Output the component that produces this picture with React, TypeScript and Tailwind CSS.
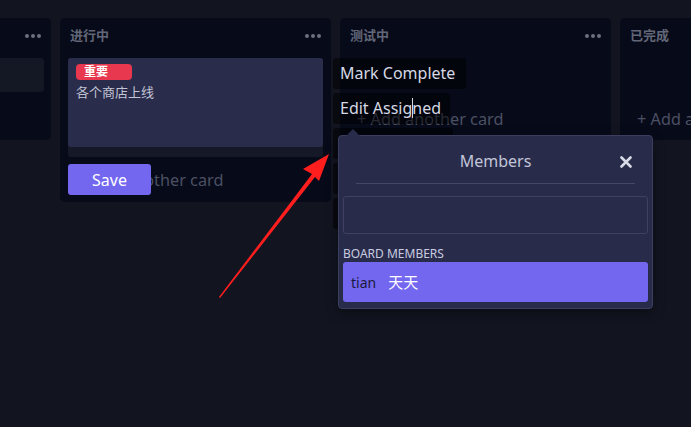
import React from "react";

const font = { fontFamily: '"Noto Sans", "Noto Sans CJK SC", sans-serif' };

function Dots() {
  return (
    <div className="flex gap-[2px] items-center">
      <span className="w-[4px] h-[4px] rounded-full bg-[#6b7080]" />
      <span className="w-[4px] h-[4px] rounded-full bg-[#6b7080]" />
      <span className="w-[4px] h-[4px] rounded-full bg-[#6b7080]" />
    </div>
  );
}

function Header({ title, dots = true }: { title: string; dots?: boolean }) {
  return (
    <div className="h-[40px] flex items-center justify-between pl-[10px] pr-[10px] pb-[4px]">
      <span className="text-[13px] font-bold text-[#626778]">{title}</span>
      {dots && <Dots />}
    </div>
  );
}

function AddCard() {
  return (
    <div className="h-[30px] flex items-center pl-[17px] text-[16.25px] text-[#4b5062] whitespace-nowrap overflow-hidden">
      + Add another card
    </div>
  );
}

export default function App() {
  return (
    <div style={font} className="relative w-[691px] h-[427px] bg-[#121520] overflow-hidden">
      <div className="flex items-start gap-[9px] pt-[18px] ml-[-220px]">
        {/* Column 1 */}
        <div className="w-[271px] shrink-0 bg-[#070a19] rounded-[5px] pb-[6px]">
          <Header title="待处理" />
          <div className="px-[7px]">
            <div className="h-[34px] bg-[#141724] rounded-[3px]" />
          </div>
          <div className="h-[12px]" />
          <AddCard />
        </div>
        {/* Column 2 */}
        <div className="w-[271px] shrink-0 bg-[#070a19] rounded-[5px] pb-[7px] relative">
          <Header title="进行中" />
          <div className="px-[8px]">
            <div className="rounded-[3px] bg-[#151826]">
              <div className="h-[89px] bg-[#292c4b] rounded-[3px] px-[8px] pt-[6px]">
                <div className="w-[56px] h-[16px] rounded-[4px] bg-[#e8384f] text-white text-[12px] font-bold leading-[16px] pl-[8px]">
                  重要
                </div>
                <div className="mt-[3px] text-[13px] text-[#c2c5d6] leading-[18px]">各个商店上线</div>
              </div>
              <div className="h-[10px]" />
            </div>
          </div>
          <div className="h-[8px]" />
          <AddCard />
          <div className="absolute left-[8px] top-[146px] w-[83px] h-[31px] bg-[#7367f0] rounded-[3px] flex items-center justify-center text-white text-[16px]">
            Save
          </div>
        </div>
        {/* Column 3 */}
        <div className="w-[271px] shrink-0 bg-[#070a19] rounded-[5px] pb-[6px]">
          <Header title="测试中" />
          <div className="h-[46px]" />
          <AddCard />
        </div>
        {/* Column 4 */}
        <div className="w-[271px] shrink-0 bg-[#070a19] rounded-[5px] pb-[6px]">
          <Header title="已完成" dots={false} />
          <div className="h-[46px]" />
          <AddCard />
        </div>
      </div>

      {/* Quick edit menu buttons */}
      <div className="absolute left-[333px] top-[58px] flex flex-col items-start gap-[4px]">
        <div className="h-[31px] w-[133px] bg-[rgba(0,0,0,0.5)] rounded-[3px] flex items-center pl-[7px] pb-[2px] text-[16px] text-[#d5d8e5]">
          Mark Complete
        </div>
        <div className="h-[31px] w-[117px] bg-[rgba(0,0,0,0.5)] rounded-[3px] flex items-center pl-[7px] pb-[2px] text-[16px] text-[#d5d8e5]">
          <span>Edit Assig</span>
          <span className="inline-block w-[1px] h-[20px] bg-[#d5d8e5] mx-[-0.5px]" />
          <span>ned</span>
        </div>
        <div className="h-[31px] w-[120px] bg-[rgba(0,0,0,0.5)] rounded-[3px]" />
        <div className="h-[31px] w-[120px] bg-[rgba(0,0,0,0.5)] rounded-[3px]" />
        <div className="h-[31px] w-[120px] bg-[rgba(0,0,0,0.5)] rounded-[3px]" />
      </div>

      {/* Members popover */}
      <div className="absolute left-[338px] top-[135px] w-[315px] h-[174px] bg-[#282b4a] border border-[#3b3e5e] rounded-[4px] shadow-[0_4px_12px_rgba(0,0,0,0.4)]">
        <div className="absolute left-[7px] top-[-7px] w-0 h-0 border-l-[7px] border-r-[7px] border-b-[7px] border-l-transparent border-r-transparent border-b-[#282b4a]" />
        <div className="relative h-[48px] mx-[17px] border-b border-[#44476a] flex items-center justify-center pt-[3px]">
          <span className="text-[16px] text-[#c2c5d9]">Members</span>
          <svg className="absolute right-[3px] top-[20px]" width="12" height="12" viewBox="0 0 12 12">
            <path d="M1.5 1.5 L10.5 10.5 M10.5 1.5 L1.5 10.5" stroke="#d8dae6" strokeWidth="2.6" strokeLinecap="round" />
          </svg>
        </div>
        <div className="px-[4px] pt-[12px]">
          <div className="h-[38px] border border-[#3e4163] rounded-[3px]" />
          <div className="mt-[12px] text-[12px] text-[#c8cbe0] leading-[16px]">BOARD MEMBERS</div>
          <div className="h-[40px] bg-[#7367ef] rounded-[3px] flex items-center pl-[8px] gap-[12px]">
            <span className="text-[14px] text-[#1b1a3c]">tian</span>
            <span className="text-[15px] text-white">天天</span>
          </div>
        </div>
      </div>

      {/* Red arrow annotation */}
      <svg className="absolute left-0 top-0 pointer-events-none" width="691" height="427">
        <polygon
          points="219,297 312,174 303,169 329,154 319,181 315,177 220,298"
          fill="#ff1e1e"
        />
      </svg>
    </div>
  );
}
